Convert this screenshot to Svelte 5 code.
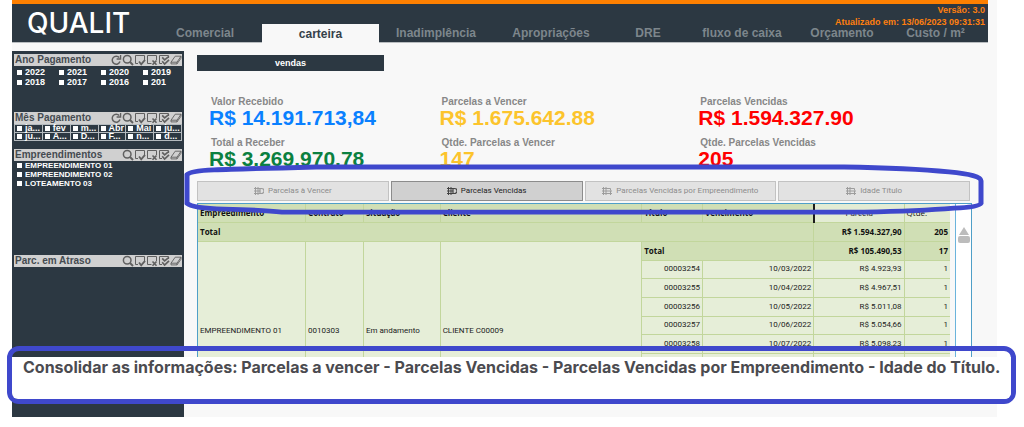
<script>
  const tabs = ['Comercial', 'carteira', 'Inadimplência', 'Apropriações', 'DRE', 'fluxo de caixa', 'Orçamento', 'Custo / m²'];
  let activeTab = $state('carteira');

  const filters = [
    { title: 'Ano Pagamento', kind: 'years', refresh: true, options: ['2022', '2021', '2020', '2019', '2018', '2017', '2016', '201'] },
    { title: 'Mês Pagamento', kind: 'months', refresh: true, options: ['ja...', 'fev', 'm...', 'Abr', 'Mai', 'ju...', 'ju...', 'A...', 'D...', 'F...', 'n...', 'd...'] },
    { title: 'Empreendimentos', kind: 'projects', refresh: false, options: ['EMPREENDIMENTO 01', 'EMPREENDIMENTO 02', 'LOTEAMENTO 03'] },
    { title: 'Parc. em Atraso', kind: 'late', refresh: false, options: [] }
  ];

  const kpis = [
    { label: 'Valor Recebido', value: 'R$ 14.191.713,84', tone: 'blue' },
    { label: 'Parcelas a Vencer', value: 'R$ 1.675.642.88', tone: 'amber' },
    { label: 'Parcelas Vencidas', value: 'R$ 1.594.327.90', tone: 'red' },
    { label: 'Total a Receber', value: 'R$ 3.269.970.78', tone: 'green' },
    { label: 'Qtde. Parcelas a Vencer', value: '147', tone: 'amber' },
    { label: 'Qtde. Parcelas Vencidas', value: '205', tone: 'red' }
  ];

  const views = [
    { name: 'Parcelas à Vencer', pivot: false },
    { name: 'Parcelas Vencidas', pivot: false },
    { name: 'Parcelas Vencidas por Empreendimento', pivot: true },
    { name: 'Idade Título', pivot: true }
  ];
  let activeView = $state('Parcelas Vencidas');

  const rows = [
    ['00003254', '10/03/2022', 'R$ 4.923,93', '1'],
    ['00003255', '10/04/2022', 'R$ 4.967,51', '1'],
    ['00003256', '10/05/2022', 'R$ 5.011,08', '1'],
    ['00003257', '10/06/2022', 'R$ 5.054,66', '1'],
    ['00003258', '10/07/2022', 'R$ 5.098,23', '1'],
    ['', '', '', ''],
    ['', '', '', ''],
    ['', '', '', '']
  ];
</script>

{#snippet icon(name)}
  <svg viewBox="0 0 12 12" aria-hidden="true">
    {#if name === 'refresh'}
      <path d="M9.3 3.6A4 4 0 1 0 10 7.6" stroke-width="1.5" /><path d="M10.6 1v4H6.6" stroke-width="1.3" />
    {:else if name === 'search'}
      <circle cx="5.2" cy="5.2" r="3.8" stroke-width="1.5" /><path d="M8 8l3 3" stroke-width="1.9" />
    {:else if name === 'check'}
      <path d="M4 9.5H1.5V1.5h9V6" /><path d="M5 7.5l2.2 2.8L11 5.8" stroke-width="1.8" />
    {:else if name === 'clear'}
      <path d="M5.5 9.5h-4v-8h9V6" /><path d="M6.5 6.5l4 4.2M10.5 6.5l-4 4.2" stroke-width="1.6" />
    {:else if name === 'all'}
      <path d="M4 9.5H1.5V1.5h9V4" /><path d="M4.2 3.4l2.4 2.4L11 2.4M4.2 7.2l2.4 2.8L11 5.8" stroke-width="1.7" />
    {:else}
      <path d="M1 8.2L5.2 2.2h5.8L7 8.2zM1 8.2v1.7h6V8.2M7 9.9l4-5.7v-2" stroke-width="0.9" />
    {/if}
  </svg>
{/snippet}

<div class="page">
  <header>
    <h1>QUALIT</h1>
    <nav>
      {#each tabs as tab}
        <button class:active={tab === activeTab} onclick={() => (activeTab = tab)}>{tab}</button>
      {/each}
    </nav>
    <div class="meta"><p>Versão: 3.0</p><p>Atualizado em: 13/06/2023 09:31:31</p></div>
  </header>

  <div class="body">
    <aside>
      {#each filters as f}
        <section class={f.kind}>
          <div class="bar">
            <h2>{f.title}</h2>
            <div class="tools">
              {#if f.refresh}<button aria-label="Atualizar">{@render icon('refresh')}</button>{/if}
              <button aria-label="Pesquisar">{@render icon('search')}</button>
              <button aria-label="Selecionar">{@render icon('check')}</button>
              <button aria-label="Excluir">{@render icon('clear')}</button>
              <button aria-label="Selecionar todos">{@render icon('all')}</button>
              <button aria-label="Limpar">{@render icon('erase')}</button>
            </div>
          </div>
          <div class="options">
            {#each f.options as o}
              <label><input type="checkbox" /><span>{o}</span></label>
            {/each}
          </div>
        </section>
      {/each}
    </aside>

    <main>
      <button class="sub">vendas</button>
      <div class="kpis">
        {#each kpis as k}
          <div class="kpi"><h3>{k.label}</h3><p class={k.tone}>{k.value}</p></div>
        {/each}
      </div>

      <div class="views">
        {#each views as v}
          <button class:active={v.name === activeView} onclick={() => (activeView = v.name)}>
            <svg viewBox="0 0 10 8" aria-hidden="true">
              <path d="M0 1.5h6M0 4h6M0 6.5h6M1.5 0v8M4 0v8" />
              {#if v.pivot}<path d="M6 1.5h2.5v2M6 4h4M6 6.5h4M8.5 4v4" />{:else}<path d="M6 1.5h1.5a2.5 2.5 0 0 1 0 5H6z" stroke-width="1.2" />{/if}
            </svg>
            {v.name}
          </button>
        {/each}
        <svg class="loop" viewBox="0 0 800 54" preserveAspectRatio="none" aria-hidden="true">
          <path d="M3 11Q6 7 30 6T132 3L660 3Q725 4 765 8Q797 11 797 17V40Q795 44 770 45Q735 48 680 49H98Q80 47 40 46Q8 45 3 40Z" />
        </svg>
      </div>

      <div class="grid">
        <div class="rows">
          <table>
            <colgroup><col class="c1" /><col class="c2" /><col class="c3" /><col class="c4" /><col class="c5" /><col class="c6" /><col class="c7" /><col class="c8" /></colgroup>
            <thead>
              <tr><th>Empreedimento</th><th>Contrato</th><th>Situação</th><th>Cliente</th><th>Título</th><th>Vencimento</th><th class="measure mark">Parcela</th><th class="measure">Qtde.</th></tr>
            </thead>
            <tbody>
              <tr class="total"><td colspan="6">Total</td><td class="num">R$ 1.594.327,90</td><td class="num">205</td></tr>
              <tr class="total">
                <td class="dim" rowspan="9">EMPREENDIMENTO 01</td><td class="dim" rowspan="9">0010303</td><td class="dim" rowspan="9">Em andamento</td><td class="dim" rowspan="9">CLIENTE C00009</td>
                <td colspan="2">Total</td><td class="num">R$ 105.490,53</td><td class="num">17</td>
              </tr>
              {#each rows as r}
                <tr>{#each r as cell}<td class="num">{cell}</td>{/each}</tr>
              {/each}
            </tbody>
          </table>
        </div>
        <div class="scroll" aria-hidden="true"><i class="up"></i><i class="thumb"></i></div>
      </div>
    </main>
  </div>

  <div class="note"><p>Consolidar as informações: Parcelas a vencer - Parcelas Vencidas - Parcelas Vencidas por Empreendimento - Idade do Título.</p></div>
</div>

<style>
  :global(body) { background: #fff; font-family: "Liberation Sans", Arial, sans-serif; overflow: hidden; }
  h1, h2, h3, p { margin: 0; }
  button { font: inherit; border: 0; padding: 0; background: none; cursor: pointer; }
  .page { position: relative; margin: 0 27px 0 12px; background: #f8f8f8; }

  header { position: relative; display: grid; grid-template-columns: 136fr 836fr; min-height: 38px; margin-right: 9px; padding-right: 4px; border-top: 4px solid #ff8000; border-bottom: 1px solid #b9bdc0; background: #2c3842; }
  h1 { padding: 4px 0 0 15px; font: 500 28px/30px Inter, sans-serif; color: #fff; }
  nav { display: grid; grid-template-columns: 114fr 117fr 114fr 116fr 78fr 110fr 90fr 97fr; align-items: end; }
  nav button { height: 18px; font-size: 12px; line-height: 18px; font-weight: bold; color: #7d868c; white-space: nowrap; }
  nav button.active { background: #f8f8f8; color: #35414a; margin-bottom: -1px; height: 19px; }
  .meta { position: absolute; top: 0; right: 3px; text-align: right; font-size: 9px; line-height: 12px; font-weight: bold; color: #ff7f0e; }

  .body { display: grid; grid-template-columns: 172px 1fr; gap: 13px; padding-top: 8px; }
  aside { padding: 3px 2px 0; background: #2c3842; }
  .bar { display: flex; justify-content: space-between; align-items: center; height: 12px; background: #d0d0d0; }
  h2 { padding-left: 1px; font-size: 10px; line-height: 12px; color: #454b50; }
  .tools { display: flex; }
  .tools button { display: flex; }
  .tools svg { width: 12px; height: 12px; fill: none; stroke: #606060; }
  .options { display: grid; font-size: 9px; font-weight: bold; color: #fff; }
  label { display: flex; align-items: center; gap: 3px; padding-left: 3px; min-width: 0; line-height: 9px; white-space: nowrap; }
  input { appearance: none; flex: none; width: 5px; height: 5px; margin: 0; background: #fff; }
  .years { min-height: 58px; }
  .years .options { grid-template-columns: repeat(4, 1fr); padding-top: 1px; }
  .years label { line-height: 10px; }
  .months { min-height: 37px; }
  .months .options { grid-template-columns: repeat(6, 1fr); border: 1px solid #b4babe; border-width: 1px 0 0 1px; }
  .months label { height: 7px; padding-left: 2px; border: 1px solid #b4babe; border-width: 0 1px 1px 0; }
  .projects { min-height: 106px; }
  .projects .options { font-size: 8px; }
  .late { min-height: 162px; }

  main { display: flex; flex-direction: column; min-width: 0; padding: 4px 25px 0 0; }
  .sub { width: 187px; height: 16px; background: #2c3842; color: #fff; font-size: 9px; font-weight: bold; }
  .kpis { display: grid; grid-template-columns: 230fr 258fr 273fr; row-gap: 5px; padding: 25px 0 0 12px; }
  .kpi h3 { padding-left: 2px; font-size: 10px; line-height: 12px; color: #878787; }
  .kpi p { font-size: 21px; line-height: 24px; font-weight: bold; white-space: nowrap; margin-top: -2px; }
  .kpi { margin-bottom: 2px; }
  .blue { color: #0a80ff; }
  .amber { color: #fcc42c; }
  .red { color: #f00; }
  .green { color: #0b8040; }

  .views { position: relative; display: grid; grid-template-columns: repeat(4, 1fr); gap: 2px; margin: 8px 2px 2px 0; }
  .views button { display: flex; align-items: center; justify-content: center; gap: 4px; height: 20px; border: 1px solid #c2c2c2; background: #e2e2e2; color: #8c8c8c; font: 8px/12px Roboto, sans-serif; white-space: nowrap; }
  .views button.active { border-color: #8c8c8c; background: #d0d0d0; color: #222; }
  .views button svg { width: 10px; height: 8px; fill: none; stroke: currentColor; stroke-width: 1; opacity: 0.8; }
  .loop { position: absolute; z-index: 2; left: -13px; top: -17px; width: calc(100% + 27px); height: 53px; pointer-events: none; }
  .loop path { fill: none; stroke: #3f48cc; stroke-width: 5; }

  .grid { display: grid; grid-template-columns: 1fr 21px; height: 199px; border: 1px solid #4f9fc8; border-width: 1px 1px 0; overflow: hidden; }
  .rows { overflow: hidden; }
  table { width: 100%; table-layout: fixed; border-collapse: collapse; font: 8px/12px Roboto, sans-serif; color: #222; background: #e6eed8; }
  .c1 { width: 14.3%; } .c2 { width: 7.7%; } .c3 { width: 10.2%; } .c4 { width: 26.8%; } .c5 { width: 8.1%; } .c6 { width: 14.8%; } .c7 { width: 12%; } .c8 { width: 6.1%; }
  tr { height: 19px; }
  thead tr, tr:nth-child(3n) { height: 18px; }
  th, td { padding: 0 2px; border: 1px solid #c2d69c; border-width: 0 1px 1px 0; white-space: nowrap; text-align: left; }
  th, .total td { background: #d0dfb5; font-family: "Open Sans", sans-serif; font-weight: bold; color: #111; }
  th.measure { background: #e3ecd4; text-align: center; font-weight: normal; }
  th.measure:last-child { text-align: left; }
  th.mark { border-left: 2px solid #1c1c1c; }
  td.num, .total td.num { text-align: right; }
  .total td.dim { background: #e6eed8; font-family: Roboto, sans-serif; font-weight: normal; color: #222; padding-top: 12px; }
  tr > :last-child { border-right: 0; }
  .scroll { display: flex; flex-direction: column; align-items: center; gap: 1px; margin-left: 5px; padding-top: 23px; border-left: 1px solid #6bb4dc; background: #fff; }
  .up { border: 5px solid transparent; border-top: 0; border-bottom: 8px solid #bcbcbc; }
  .thumb { width: 12px; height: 7px; border-radius: 2px; background: #bcbcbc; }

  .note { position: absolute; z-index: 3; left: -5px; right: -19px; top: 346px; padding: 6px 0 0; border: 5px solid #3f48cc; border-radius: 12px; }
  .note p { padding: 0 0 22px 11px; background: #fff; border-radius: 0 0 6px 6px; font: 700 16px/20px Inter, Arial, sans-serif; color: #4b4b50; white-space: nowrap; }
</style>
